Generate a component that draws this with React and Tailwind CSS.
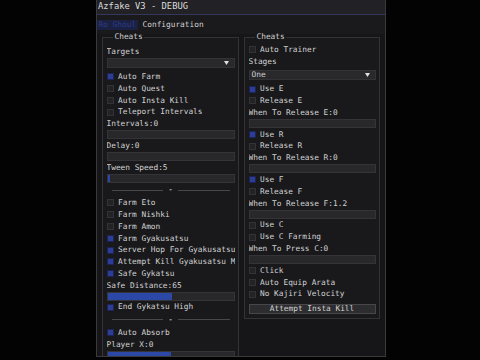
const leftItems = [
  { t: 'label', text: 'Targets' },
  { t: 'combo', text: '' },
  { t: 'cb', text: 'Auto Farm', on: true },
  { t: 'cb', text: 'Auto Quest' },
  { t: 'cb', text: 'Auto Insta Kill' },
  { t: 'cb', text: 'Teleport Intervals' },
  { t: 'slider', text: 'Intervals:0', fill: 0 },
  { t: 'slider', text: 'Delay:0', fill: 0 },
  { t: 'slider', text: 'Tween Speed:5', fill: 2 },
  { t: 'sep' },
  { t: 'cb', text: 'Farm Eto' },
  { t: 'cb', text: 'Farm Nishki' },
  { t: 'cb', text: 'Farm Amon' },
  { t: 'cb', text: 'Farm Gyakusatsu', on: true },
  { t: 'cb', text: 'Server Hop For Gyakusatsu', on: true },
  { t: 'cb', text: 'Attempt Kill Gyakusatsu Mob', on: true },
  { t: 'cb', text: 'Safe Gykatsu', on: true },
  { t: 'slider', text: 'Safe Distance:65', fill: 51 },
  { t: 'cb', text: 'End Gykatsu High', on: true },
  { t: 'sep' },
  { t: 'cb', text: 'Auto Absorb', on: true },
  { t: 'slider', text: 'Player X:0', fill: 50 },
]

const rightItems = [
  { t: 'cb', text: 'Auto Trainer' },
  { t: 'label', text: 'Stages' },
  { t: 'combo', text: 'One', mt: true },
  { t: 'cb', text: 'Use E', on: true },
  { t: 'cb', text: 'Release E' },
  { t: 'slider', text: 'When To Release E:0', fill: 0 },
  { t: 'cb', text: 'Use R', on: true },
  { t: 'cb', text: 'Release R' },
  { t: 'slider', text: 'When To Release R:0', fill: 0 },
  { t: 'cb', text: 'Use F', on: true },
  { t: 'cb', text: 'Release F' },
  { t: 'slider', text: 'When To Release F:1.2', fill: 0 },
  { t: 'cb', text: 'Use C' },
  { t: 'cb', text: 'Use C Farming' },
  { t: 'slider', text: 'When To Press C:0', fill: 0 },
  { t: 'cb', text: 'Click' },
  { t: 'cb', text: 'Auto Equip Arata' },
  { t: 'cb', text: 'No Kajiri Velocity' },
  { t: 'button', text: 'Attempt Insta Kill' },
]

function Item({ item }) {
  if (item.t === 'cb') {
    return (
      <div className="flex h-[11.8px] shrink-0 items-center gap-[4.5px] whitespace-nowrap">
        <div
          className={`h-[7px] w-[7px] shrink-0 border ${
            item.on ? 'border-[#1d2455] bg-[#2b3d94]' : 'border-[#333337] bg-[#232326]'
          }`}
        />
        <span>{item.text}</span>
      </div>
    )
  }
  if (item.t === 'label') {
    return <div className="flex h-[12px] shrink-0 items-center whitespace-nowrap">{item.text}</div>
  }
  if (item.t === 'combo') {
    return (
      <div
        className={`mb-[3.3px] flex h-[10px] shrink-0 items-center justify-between border border-[#333337] bg-[#29292c] pl-[2px] pr-[5px] ${
          item.mt ? 'mt-[2px]' : ''
        }`}
      >
        <span>{item.text}</span>
        <svg width="5" height="4" viewBox="0 0 5 4">
          <path d="M0 0 L5 0 L2.5 4 Z" fill="#e0e0e0" />
        </svg>
      </div>
    )
  }
  if (item.t === 'slider') {
    return (
      <>
        <div className="flex h-[12px] shrink-0 items-center whitespace-nowrap">{item.text}</div>
        <div className="mb-[0.8px] h-[9px] shrink-0 border border-[#343438] bg-[#28282b]">
          <div className="h-full bg-[#2c48a6]" style={{ width: `${item.fill}%` }} />
        </div>
      </>
    )
  }
  if (item.t === 'sep') {
    return (
      <div className="flex h-[13.5px] shrink-0 items-center gap-[5px] px-[5px]">
        <div className="h-px flex-1 bg-[#48484c]" />
        <span className="text-white">-</span>
        <div className="h-px flex-1 bg-[#48484c]" />
      </div>
    )
  }
  return (
    <div className="mt-[3.8px] flex h-[10px] shrink-0 items-center justify-center border border-[#47474b] bg-[#2d2d30]">
      {item.text}
    </div>
  )
}

function Panel({ items, className, pt }) {
  return (
    <div className={`relative flex flex-col border border-[#333337] bg-[#19191c] px-[3.5px] ${pt} ${className}`}>
      <span className="absolute left-[10px] top-[-5px] bg-[#19191c] px-[1.5px] leading-[8px]">Cheats</span>
      <div className="flex flex-col overflow-hidden">
        {items.map((item, i) => (
          <Item key={i} item={item} />
        ))}
      </div>
    </div>
  )
}

export default function App() {
  return (
    <div className="flex h-[360px] w-[480px] overflow-hidden bg-[#030303] pl-[96px] font-['DejaVu_Sans_Mono',monospace] text-[7.8px] text-[#d2d2d2]">
      <div className="flex h-[357px] w-[290px] flex-col overflow-hidden border-x border-b border-[#3a3a3e] bg-[#161618]">
        <div className="flex h-[15px] shrink-0 items-center border-b border-[#33375a] bg-[#222226] pl-[1px] text-[8.8px] text-[#dcdcdc]">
          Azfake V3 - DEBUG
        </div>
        <div className="flex h-[19px] shrink-0 items-center gap-[5px] bg-[#1a1a1d]">
          <div className="flex h-[10px] items-center bg-[#1b2142] px-[1.5px] text-[#2d3c8c]">Ro Ghoul</div>
          <div>Configuration</div>
        </div>
        <div className="flex min-h-0 flex-1 items-start gap-[5px] px-[5px] pt-[3px]">
          <Panel items={leftItems} className="h-[330px] w-[137px]" pt="pt-[7.7px]" />
          <Panel items={rightItems} className="w-[138px] pb-[4px]" pt="pt-[6.1px]" />
        </div>
      </div>
    </div>
  )
}
